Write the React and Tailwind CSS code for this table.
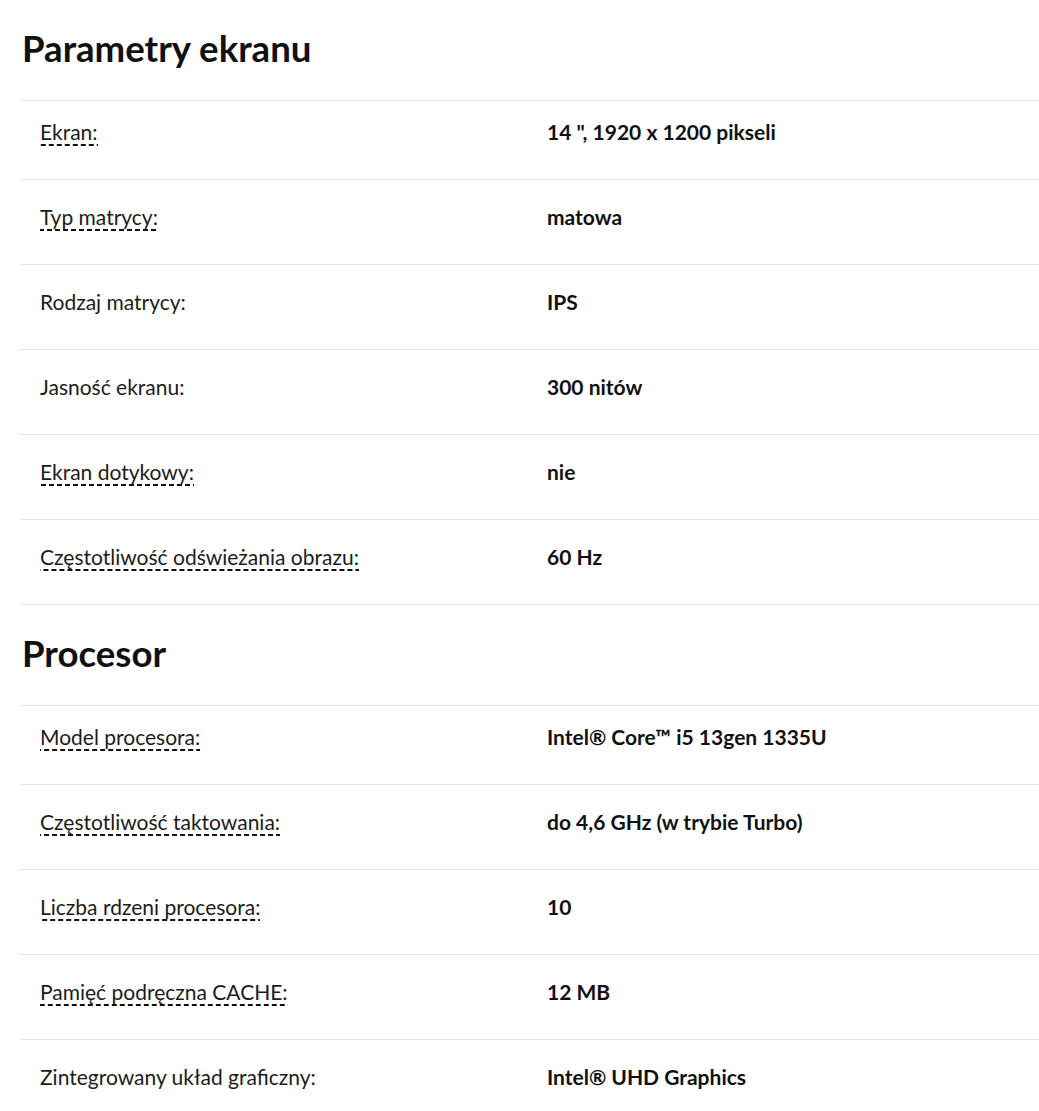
const sections = [
  {
    title: 'Parametry ekranu',
    rows: [
      { label: 'Ekran:', value: '14 ", 1920 x 1200 pikseli', hint: true },
      { label: 'Typ matrycy:', value: 'matowa', hint: true },
      { label: 'Rodzaj matrycy:', value: 'IPS' },
      { label: 'Jasność ekranu:', value: '300 nitów' },
      { label: 'Ekran dotykowy:', value: 'nie', hint: true },
      { label: 'Częstotliwość odświeżania obrazu:', value: '60 Hz', hint: true },
    ],
  },
  {
    title: 'Procesor',
    rows: [
      { label: 'Model procesora:', value: 'Intel® Core™ i5 13gen 1335U', hint: true },
      { label: 'Częstotliwość taktowania:', value: 'do 4,6 GHz (w trybie Turbo)', hint: true },
      { label: 'Liczba rdzeni procesora:', value: '10', hint: true },
      { label: 'Pamięć podręczna CACHE:', value: '12 MB', hint: true },
      { label: 'Zintegrowany układ graficzny:', value: 'Intel® UHD Graphics' },
    ],
  },
];

const SpecRow = ({ row, first }) => (
  <div className={`grid grid-cols-[507px_1fr] border-t border-[#e6e6e6] text-[21px] leading-[30px] pb-[32px] ${first ? 'pt-[16px]' : 'pt-[22px]'}`}>
    <div className="pl-5 text-[#1c1c1c]">
      {row.hint ? (
        <span className="pb-[2px] bg-[linear-gradient(to_right,#111_62%,transparent_0)] bg-[length:8px_2px] bg-repeat-x bg-bottom cursor-help">
          {row.label}
        </span>
      ) : (
        row.label
      )}
    </div>
    <div className="pl-5 font-bold text-[#111]">{row.value}</div>
  </div>
);

const App = () => {
  return (
    <div className="min-h-screen bg-white pl-5 font-['Lato',sans-serif]">
      {sections.map(section => (
        <section key={section.title}>
          <h2 className="pl-[2px] pt-[26px] pb-[30px] text-[36.6px] leading-[44px] font-bold text-[#111]">
            {section.title}
          </h2>
          <div className="border-b border-[#e6e6e6]">
            {section.rows.map((row, i) => (
              <SpecRow key={row.label} row={row} first={i === 0} />
            ))}
          </div>
        </section>
      ))}
    </div>
  );
};

export default App;
